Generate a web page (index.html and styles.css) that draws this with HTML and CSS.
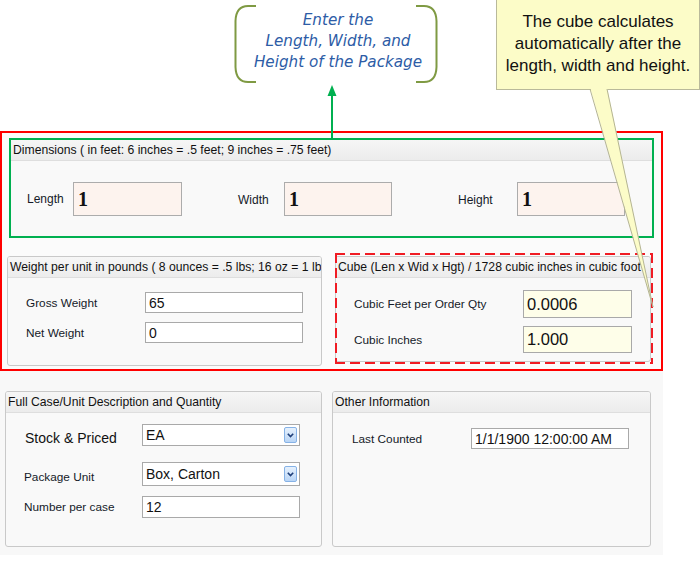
FILE: index.html
```html
<!DOCTYPE html>
<html lang="en">
<head>
<meta charset="utf-8">
<title>Package Dimensions</title>
<link rel="stylesheet" href="styles.css">
</head>
<body>
<div class="page">
  <header class="notes">
    <div class="bracket-note">
      <svg class="bracket bracket--left" width="24" height="78" viewBox="0 0 24 78"><path d="M23 1 H15 Q3 1 2.5 16 V62 Q3 77 15 77 H23"/></svg>
      <p class="bracket-text">Enter the<br>Length, Width, and<br>Height of the Package</p>
      <svg class="bracket bracket--right" width="24" height="78" viewBox="0 0 24 78"><path d="M1 1 H9 Q21 1 21.5 16 V62 Q21 77 9 77 H1"/></svg>
    </div>
    <div class="tip">The cube calculates<br>automatically after the<br>length, width and height.</div>
  </header>

  <main class="app">
    <section class="highlight">
      <div class="group group--dims">
        <div class="group-head">Dimensions ( in feet: 6 inches = .5 feet; 9 inches = .75 feet)</div>
        <div class="dims-body">
          <div class="dim"><span class="dim-label dim-label--length">Length</span><span class="dim-box">1</span></div>
          <div class="dim dim--width"><span class="dim-label dim-label--width">Width</span><span class="dim-box dim-box--narrow">1</span></div>
          <div class="dim dim--height"><span class="dim-label dim-label--height">Height</span><span class="dim-box dim-box--narrow">1</span></div>
        </div>
      </div>

      <div class="pair">
        <div class="group group--weight">
          <div class="group-head">Weight per unit in pounds ( 8 ounces = .5 lbs; 16 oz = 1 lb</div>
          <div class="body body--weight">
            <div class="row"><span class="label label--w">Gross Weight</span><span class="field">65</span></div>
            <div class="row"><span class="label label--w">Net Weight</span><span class="field">0</span></div>
          </div>
        </div>
        <div class="dashed">
          <div class="group group--cube">
            <div class="group-head">Cube (Len x Wid x Hgt) / 1728 cubic inches in cubic foot</div>
            <div class="body body--cube">
              <div class="row"><span class="label label--c">Cubic Feet per Order Qty</span><span class="field field--cube">0.0006</span></div>
              <div class="row"><span class="label label--c">Cubic Inches</span><span class="field field--cube field--cube2">1.000</span></div>
            </div>
          </div>
        </div>
      </div>
    </section>

    <div class="pair pair--bottom">
      <div class="group group--case">
        <div class="group-head">Full Case/Unit Description and Quantity</div>
        <div class="body body--case">
          <div class="row"><span class="label label--b label--big">Stock &amp; Priced</span><span class="field field--select">EA<span class="drop"><svg width="7" height="5" viewBox="0 0 7 5"><path d="M0.8 0.8 L3.5 3.6 L6.2 0.8"/></svg></span></span></div>
          <div class="row row--pkg"><span class="label label--b label--low">Package Unit</span><span class="field field--select field--tall">Box, Carton<span class="drop"><svg width="7" height="5" viewBox="0 0 7 5"><path d="M0.8 0.8 L3.5 3.6 L6.2 0.8"/></svg></span></span></div>
          <div class="row row--num"><span class="label label--b">Number per case</span><span class="field field--wide">12</span></div>
        </div>
      </div>
      <div class="group group--other">
        <div class="group-head">Other Information</div>
        <div class="body body--other">
          <div class="row"><span class="label label--o">Last Counted</span><span class="field">1/1/1900 12:00:00 AM</span></div>
        </div>
      </div>
    </div>
  </main>

  <svg class="overlay" width="700" height="561" viewBox="0 0 700 561">
    <line x1="332" y1="94" x2="332" y2="139" stroke="#00b050" stroke-width="2"/>
    <polygon points="332,85 327.5,96 336.5,96" fill="#00b050"/>
    <polygon points="590,87 607,87 653,307" fill="#fcfcc8"/>
    <polyline points="590,89 653,307 607,89" fill="none" stroke="#b4b494" stroke-width="1"/>
  </svg>
</div>
</body>
</html>
```

FILE: styles.css
```css
* { box-sizing: border-box; }
html, body { margin: 0; padding: 0; background: #fff; }
body { font-family: "Liberation Sans", Arial, sans-serif; color: #111; }

.page { position: relative; width: 700px; height: 561px; overflow: hidden; }

/* ---------- notes ---------- */
.notes { display: flex; align-items: flex-start; height: 131px; }
.bracket-note { display: flex; align-items: flex-start; margin: 5px 0 0 233px; }
.bracket { flex: none; fill: none; stroke: #7f9a43; stroke-width: 2; }
.bracket--left { margin-right: -4px; }
.bracket--right { margin-left: -8px; }
.bracket-text {
  margin: 0; width: 170px; padding-top: 5px; text-align: center;
  font-family: "DejaVu Sans", Verdana, sans-serif; font-style: italic;
  font-size: 15.2px; line-height: 21px; color: #2d5ca6; white-space: nowrap;
}
.tip {
  margin-left: auto; width: 204px; height: 90px; padding-top: 11px;
  background: #fcfcc8; border: 1px solid #b9b99a; border-top: 0;
  text-align: center; font-size: 17px; line-height: 22px; color: #111;
}

/* ---------- app ---------- */
.app { width: 663px; height: 424px; background: #f8f8f8; }
.highlight { height: 240px; border: 2px solid #ff0000; padding: 5px 7px 0; background: #fbfbfb; }

.group {
  background: #f9f9f9; border: 1px solid #c9c9c9; border-radius: 3px; overflow: hidden;
}
.group-head {
  height: 21px; padding-left: 2px; border-bottom: 1px solid #dedede;
  background: linear-gradient(#f6f6f6, #ececec);
  font-size: 12.2px; line-height: 21px; color: #111;
  white-space: nowrap; overflow: hidden;
}

.group--dims { height: 100px; border: 2px solid #00b050; border-radius: 0; }
.dims-body { display: flex; align-items: center; padding: 21px 0 0 16px; }
.dim { display: flex; align-items: center; }
.dim--width { margin-left: 56px; }
.dim--height { margin-left: 66px; }
.dim-label { font-size: 12px; color: #141a28; }
.dim-label--length { width: 46px; }
.dim-label--width { width: 46px; padding-top: 2px; }
.dim-label--height { width: 59px; padding-top: 2px; }
.dim-box {
  width: 109px; height: 34px; padding-left: 4px;
  background: #fdf3ee; border: 1px solid #acacac;
  font: bold 20px/32px "Liberation Serif", "Times New Roman", serif; color: #111;
}
.dim-box--narrow { width: 108px; }

.pair { display: flex; justify-content: space-between; align-items: flex-start; margin: 15px 1px 0 -2px; }
.group--weight { width: 315px; height: 110px; margin-top: 3px; }

.dashed { position: relative; width: 318px; height: 111px; padding: 3px 2px 0 0; }
.dashed::after {
  content: ""; position: absolute; inset: 0; pointer-events: none;
  background:
    repeating-linear-gradient(90deg, #f01c24 0 10px, transparent 10px 15px) 0 0 / 100% 2px no-repeat,
    repeating-linear-gradient(90deg, #f01c24 0 10px, transparent 10px 15px) 0 100% / 100% 2px no-repeat,
    repeating-linear-gradient(180deg, #f01c24 0 10px, transparent 10px 15px) 0 0 / 2px 100% no-repeat,
    repeating-linear-gradient(180deg, #f01c24 0 10px, transparent 10px 15px) 100% 0 / 2px 100% no-repeat;
}
.group--cube { width: 316px; height: 106px; }

.body { display: flex; flex-direction: column; }
.body--weight { padding: 14px 0 0 18px; gap: 9px; }
.body--cube { padding: 12px 0 0 18px; gap: 8px; }
.body--case { padding: 11px 0 0 18px; }
.body--other { padding: 15px 0 0 19px; }

.row { display: flex; align-items: center; }
.label { font-size: 11.8px; color: #141a28; flex: none; }
.label--w { width: 119px; }
.label--c { width: 169px; }
.label--b { width: 118px; }
.label--o { width: 119px; }
.label--big { font-size: 14px; padding: 5px 0 0 1px; color: #111; }
.label--low { padding-top: 6px; }

.field {
  display: flex; align-items: center;
  width: 158px; height: 21px; padding-left: 3px;
  background: #fff; border: 1px solid #a9a9a9;
  font-size: 14px; color: #111; white-space: nowrap;
}
.field--wide { height: 22px; }
.field--cube { width: 109px; height: 28px; background: #fefee9; font-size: 16.5px; }
.field--cube2 { height: 27px; }
.field--select { height: 22px; padding-right: 2px; }
.field--tall { height: 24px; }
.row--pkg { margin-top: 16px; }
.row--num { margin-top: 10px; }

.drop {
  display: flex; align-items: center; justify-content: center;
  width: 13px; height: 16px; margin-left: auto;
  border: 1px solid #86b2e6; border-radius: 2px;
  background: linear-gradient(#e6f1fd, #b9d5f6);
}
.drop svg { fill: none; stroke: #1f3f7a; stroke-width: 1.6; }

.pair--bottom { width: 646px; margin: 20px 0 0 5px; }
.group--case { width: 317px; height: 156px; }
.group--other { width: 319px; height: 156px; }

.overlay { position: absolute; top: 0; left: 0; pointer-events: none; }
```
